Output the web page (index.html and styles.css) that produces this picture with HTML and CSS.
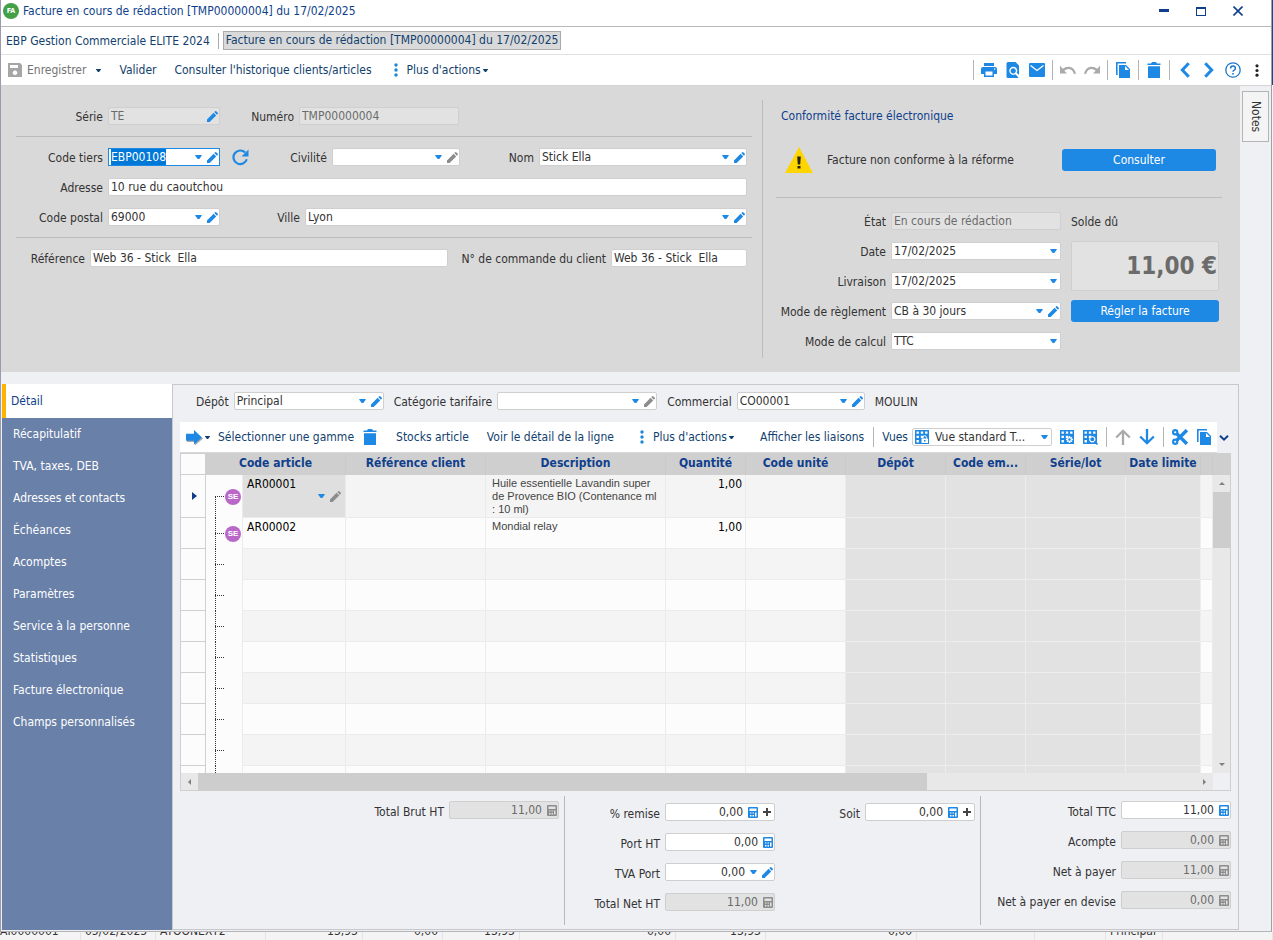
FILE: index.html
```
<!DOCTYPE html>
<html lang="fr">
<head>
    <meta charset="UTF-8">
    <meta name="viewport" content="width=device-width, initial-scale=1.0">
    <title>Facture en cours de rédaction [TMP00000004] du 17/02/2025</title>
    <link rel="stylesheet" href="styles.css">
</head>
<body>
    <!-- Icon set -->
    <svg class="sprite" aria-hidden="true">
        <symbol id="i-caret" viewBox="0 0 8 5"><path d="M0 0h8v1L5 5H3L0 1z"/></symbol>
        <symbol id="i-pencil" viewBox="0 0 11 11"><path d="M0 11V8.400L6.600 1.800 9.200 4.400 2.600 11zM7.300 1.100 8.200.200q.5-.4 1 0l1.600 1.600q.4.500 0 1l-.9.900z"/></symbol>
        <symbol id="i-save" viewBox="0 0 14 14"><path fill-rule="evenodd" d="M0 0h12l2 2v12H0zM2 2v3h8V2zM7 7.500a2.300 2.300 0 1 0 .01 0z"/></symbol>
        <symbol id="i-dots" viewBox="0 0 4 14"><circle cx="2" cy="2" r="1.700"/><circle cx="2" cy="7" r="1.700"/><circle cx="2" cy="12" r="1.700"/></symbol>
        <symbol id="i-print" viewBox="0 0 16 14"><path fill-rule="evenodd" d="M3 0h10v3H3zM2 4h12q2 0 2 2v5h-3v3H3v-3H0V6q0-2 2-2zm2.500 4.500v4h7v-4zM13 5.500v1.300h1.300V5.500z"/></symbol>
        <symbol id="i-preview" viewBox="0 0 13 16"><path fill-rule="evenodd" d="M1.500 0H9l3.500 3.500V13L10.200 10.800A4 4 0 1 0 8.800 12.200L12 15.500q-.4.500-1 .5H1.500Q0 16 0 14.500v-13Q0 0 1.500 0zM6.700 6.300a2.600 2.600 0 1 1-.01 0z"/></symbol>
        <symbol id="i-mail" viewBox="0 0 16 14"><rect width="16" height="14" rx="1"/><path d="M1.500 2.500 8 7.500l6.500-5" fill="none" stroke="#fff" stroke-width="1.300"/></symbol>
        <symbol id="i-undo" viewBox="0 0 16 9"><path d="M0 0v8h7L4.300 5.300Q6.500 3.400 9 3.600 12.500 4 14 8.800l2-.7Q14 1.300 9 1.200 5.500 1 2.700 3.200z"/></symbol>
        <symbol id="i-redo" viewBox="0 0 16 9"><path d="M16 0v8H9l2.700-2.700Q9.500 3.400 7 3.600 3.500 4 2 8.800L0 8.100Q2 1.300 7 1.200q3.500-.2 6.300 2z"/></symbol>
        <symbol id="i-copy" viewBox="0 0 14 16"><path d="M0 0h10v1.600H1.600V13H0z"/><path fill-rule="evenodd" d="M3 3h7l4 4v9H3zM9 4v4h4z"/></symbol>
        <symbol id="i-trash" viewBox="0 0 13 16"><path d="M0 1.500h3.500L4.500 0h4l1 1.500H13V3H0zM.5 4.300h12V16H.5z"/></symbol>
        <symbol id="i-prev" viewBox="0 0 10 15"><path d="M8.500 1.200 2.500 7.500l6 6.300" fill="none" stroke="currentColor" stroke-width="2.800"/></symbol>
        <symbol id="i-next" viewBox="0 0 10 15"><path d="M1.500 1.200l6 6.300-6 6.300" fill="none" stroke="currentColor" stroke-width="2.800"/></symbol>
        <symbol id="i-help" viewBox="0 0 16 16"><circle cx="8" cy="8" r="7.200" fill="none" stroke="currentColor" stroke-width="1.300"/><path d="M5.600 6.400q0-2.400 2.400-2.400t2.400 2.200q0 1.200-1.200 1.900T8 9.800" fill="none" stroke="currentColor" stroke-width="1.500"/><rect x="7.200" y="11" width="1.600" height="1.600"/></symbol>
        <symbol id="i-refresh" viewBox="0 0 17 17"><path d="M14.800 10.300A6.800 6.800 0 1 1 13.200 3.600" fill="none" stroke="currentColor" stroke-width="2.200"/><path d="M16.500.5v7h-7z"/></symbol>
        <symbol id="i-warning" viewBox="0 0 28 26"><path d="M14 0l14 26H0z" fill="#ffd500"/><path d="M12.200 9.500h3.600l-.6 8h-2.400zM12.500 19h3v2.500h-3z" fill="#222"/></symbol>
        <symbol id="i-arrow" viewBox="0 0 17 16"><path d="M1 5.500h8V2l8 7-8 7v-3.500H1z" fill="#a9a9a9"/><path d="M0 4.200h8V.5L15.800 8 8 15v-3.800H0z"/></symbol>
        <symbol id="i-grid" viewBox="0 0 15 15"><path fill-rule="evenodd" d="M0 0h14v14H0zM1.500 1.500v2.300h2.400V1.500zm4.300 0v2.300h2.400V1.500zm4.300 0v2.300h2.400V1.500zM1.500 5.800v2.300h2.400V5.800zm4.300 0v2.300h2.400V5.800zM1.500 10.100v2.300h2.400v-2.300z"/></symbol>
        <symbol id="i-lock" viewBox="0 0 15 15"><use href="#i-grid"/><rect x="6.500" y="8.500" width="6.500" height="4.500" fill="#fff"/><path d="M8 8.500V7.300q0-1.600 1.700-1.600t1.700 1.600v1.200" fill="none" stroke="#fff"/><rect x="9" y="10" width="1.500" height="1.500"/></symbol>
        <symbol id="i-gridset" viewBox="0 0 15 15"><use href="#i-grid"/><path d="M9.500 6v7M6 9.500h7M7.200 7.200l4.600 4.600M11.800 7.200l-4.600 4.600" stroke="#fff" stroke-width="1.500"/><circle cx="9.500" cy="9.500" r="1.200"/></symbol>
        <symbol id="i-gridfind" viewBox="0 0 15 15"><use href="#i-grid"/><circle cx="9.300" cy="9.300" r="2.600" fill="none" stroke="#fff" stroke-width="1.100"/><path d="M11.500 11.500l3 3" stroke="currentColor" stroke-width="1.600"/></symbol>
        <symbol id="i-up" viewBox="0 0 16 16"><path d="M8 16V2M1.200 8.500 8 1.800l6.800 6.700" fill="none" stroke="currentColor" stroke-width="2.300"/></symbol>
        <symbol id="i-down" viewBox="0 0 16 16"><path d="M8 0v14M1.200 7.500 8 14.200l6.800-6.700" fill="none" stroke="currentColor" stroke-width="2.300"/></symbol>
        <symbol id="i-cut" viewBox="0 0 15 15"><path d="M4.500 4.500 14 14M4.500 10.500 14 1" stroke="currentColor" stroke-width="3.200"/><circle cx="3" cy="3" r="2" fill="none" stroke="currentColor" stroke-width="2"/><circle cx="3" cy="12" r="2" fill="none" stroke="currentColor" stroke-width="2"/></symbol>
        <symbol id="i-chevron" viewBox="0 0 10 7"><path d="M1 1.200l4 4 4-4" fill="none" stroke="currentColor" stroke-width="2"/></symbol>
        <symbol id="i-calc" viewBox="0 0 10 11"><path fill-rule="evenodd" d="M1 0h8q1 0 1 1v9q0 1-1 1H1q-1 0-1-1V1q0-1 1-1zM1.500 1.500V4h7V1.500zM2 5.500v1h1.500v-1zm2.500 0v1H6v-1zM2 8v1.500h1.500V8zm2.500 0v1.500H6V8zM7 5.500v4h1.500v-4z"/></symbol>
        <symbol id="i-plus" viewBox="0 0 8 8"><path d="M3 0h2v3h3v2H5v3H3V5H0V3h3z"/></symbol>
        <symbol id="i-min" viewBox="0 0 10 10"><path d="M0 3h10v3H0z"/></symbol>
        <symbol id="i-max" viewBox="0 0 10 10"><path fill-rule="evenodd" d="M0 1h10v9H0zM1 3v6h8V3z"/></symbol>
        <symbol id="i-close" viewBox="0 0 10 10"><path d="M.5.500l9 9M9.500.500l-9 9" stroke="currentColor" stroke-width="1.600"/></symbol>
    </svg>

    <div class="window">
        <header class="titlebar">
            <span class="app-badge">FA</span>
            <h1>Facture en cours de rédaction [TMP00000004] du 17/02/2025</h1>
            <div class="window-buttons">
                <button aria-label="Réduire"><svg class="ico-10"><use href="#i-min"/></svg></button>
                <button aria-label="Agrandir"><svg class="ico-10"><use href="#i-max"/></svg></button>
                <button aria-label="Fermer"><svg class="ico-10"><use href="#i-close"/></svg></button>
            </div>
        </header>

        <nav class="tabs">
            <a href="#">EBP Gestion Commerciale ELITE 2024</a>
            <span class="tab-sep"></span>
            <a href="#" class="active">Facture en cours de rédaction [TMP00000004] du 17/02/2025</a>
        </nav>

        <div class="toolbar">
            <button class="save" disabled><svg class="ico-14"><use href="#i-save"/></svg>Enregistrer</button>
            <button class="drop" aria-label="Options d'enregistrement"><svg class="caret-sm"><use href="#i-caret"/></svg></button>
            <button>Valider</button>
            <button>Consulter l'historique clients/articles</button>
            <button class="more"><svg class="ico-dots"><use href="#i-dots"/></svg>Plus d'actions<svg class="caret-sm"><use href="#i-caret"/></svg></button>
            <div class="toolbar-icons">
                <span class="sep"></span>
                <button aria-label="Imprimer"><svg class="ico-16"><use href="#i-print"/></svg></button>
                <button aria-label="Aperçu"><svg class="ico-16"><use href="#i-preview"/></svg></button>
                <button aria-label="Envoyer"><svg class="ico-16"><use href="#i-mail"/></svg></button>
                <span class="sep"></span>
                <button aria-label="Annuler" disabled><svg class="ico-16"><use href="#i-undo"/></svg></button>
                <button aria-label="Rétablir" disabled><svg class="ico-16"><use href="#i-redo"/></svg></button>
                <span class="sep"></span>
                <button aria-label="Dupliquer"><svg class="ico-16"><use href="#i-copy"/></svg></button>
                <span class="sep"></span>
                <button aria-label="Supprimer"><svg class="ico-16"><use href="#i-trash"/></svg></button>
                <span class="sep"></span>
                <button aria-label="Précédent"><svg class="ico-16"><use href="#i-prev"/></svg></button>
                <button aria-label="Suivant"><svg class="ico-16"><use href="#i-next"/></svg></button>
                <button aria-label="Aide" class="help"><svg class="ico-16"><use href="#i-help"/></svg></button>
                <button aria-label="Plus" class="kebab"><svg class="ico-dots"><use href="#i-dots"/></svg></button>
            </div>
        </div>

        <div class="workspace">
            <main class="document">
                <!-- Invoice header -->
                <section class="invoice-header">
                    <div class="customer">
                        <div class="row">
                            <label class="l-first" for="serie">Série</label>
                            <div class="field w-112 disabled"><input id="serie" value="TE" disabled><button aria-label="Modifier"><svg class="pencil"><use href="#i-pencil"/></svg></button></div>
                            <label class="l-number" for="numero">Numéro</label>
                            <div class="field w-160 disabled"><input id="numero" value="TMP00000004" disabled></div>
                        </div>
                        <hr>
                        <div class="row">
                            <label class="l-first" for="codeTiers">Code tiers</label>
                            <div class="field w-112 focused"><input id="codeTiers" class="selected" value="EBP00108"><button aria-label="Choisir"><svg class="caret"><use href="#i-caret"/></svg></button><button aria-label="Modifier"><svg class="pencil"><use href="#i-pencil"/></svg></button></div>
                            <button class="refresh" aria-label="Actualiser"><svg class="ico-17"><use href="#i-refresh"/></svg></button>
                            <label class="l-title" for="civilite">Civilité</label>
                            <div class="field w-128"><select id="civilite"><option></option></select><svg class="caret"><use href="#i-caret"/></svg><button aria-label="Modifier" disabled><svg class="pencil"><use href="#i-pencil"/></svg></button></div>
                            <label class="l-name" for="nom">Nom</label>
                            <div class="field grow"><select id="nom"><option>Stick Ella</option></select><svg class="caret"><use href="#i-caret"/></svg><button aria-label="Modifier"><svg class="pencil"><use href="#i-pencil"/></svg></button></div>
                        </div>
                        <div class="row">
                            <label class="l-first" for="adresse">Adresse</label>
                            <div class="field grow"><input id="adresse" value="10 rue du caoutchou"></div>
                        </div>
                        <div class="row">
                            <label class="l-first" for="cp">Code postal</label>
                            <div class="field w-112"><select id="cp"><option>69000</option></select><svg class="caret"><use href="#i-caret"/></svg><button aria-label="Modifier"><svg class="pencil"><use href="#i-pencil"/></svg></button></div>
                            <label class="l-city" for="ville">Ville</label>
                            <div class="field grow"><select id="ville"><option>Lyon</option></select><svg class="caret"><use href="#i-caret"/></svg><button aria-label="Modifier"><svg class="pencil"><use href="#i-pencil"/></svg></button></div>
                        </div>
                        <hr>
                        <div class="row">
                            <label class="l-ref" for="reference">Référence</label>
                            <div class="field grow"><input id="reference" value="Web 36 - Stick  Ella"></div>
                            <label class="l-order" for="commande">N° de commande du client</label>
                            <div class="field w-136"><input id="commande" value="Web 36 - Stick  Ella"></div>
                        </div>
                    </div>

                    <div class="status">
                        <h2>Conformité facture électronique</h2>
                        <div class="compliance">
                            <svg class="ico-warning"><use href="#i-warning"/></svg>
                            <p>Facture non conforme à la réforme</p>
                            <button class="btn">Consulter</button>
                        </div>
                        <hr>
                        <div class="status-grid">
                            <label for="etat">État</label>
                            <div class="field disabled"><select id="etat" disabled><option>En cours de rédaction</option></select></div>
                            <label class="balance-label" for="solde">Solde dû</label>
                            <label for="date">Date</label>
                            <div class="field"><select id="date"><option>17/02/2025</option></select><svg class="caret"><use href="#i-caret"/></svg></div>
                            <input id="solde" class="balance" value="11,00 €" disabled>
                            <label for="livraison">Livraison</label>
                            <div class="field"><select id="livraison"><option>17/02/2025</option></select><svg class="caret"><use href="#i-caret"/></svg></div>
                            <label for="reglement">Mode de règlement</label>
                            <div class="field"><select id="reglement"><option>CB à 30 jours</option></select><svg class="caret"><use href="#i-caret"/></svg><button aria-label="Modifier"><svg class="pencil"><use href="#i-pencil"/></svg></button></div>
                            <button class="btn">Régler la facture</button>
                            <label for="calcul">Mode de calcul</label>
                            <div class="field"><select id="calcul"><option>TTC</option></select><svg class="caret"><use href="#i-caret"/></svg></div>
                        </div>
                    </div>
                </section>

                <div class="detail">
                    <nav class="sidebar">
                        <a href="#" class="active">Détail</a>
                        <a href="#">Récapitulatif</a>
                        <a href="#">TVA, taxes, DEB</a>
                        <a href="#">Adresses et contacts</a>
                        <a href="#">Échéances</a>
                        <a href="#">Acomptes</a>
                        <a href="#">Paramètres</a>
                        <a href="#">Service à la personne</a>
                        <a href="#">Statistiques</a>
                        <a href="#">Facture électronique</a>
                        <a href="#">Champs personnalisés</a>
                    </nav>

                    <section class="panel">
                        <div class="filters">
                            <label for="depot">Dépôt</label>
                            <div class="field w-150"><select id="depot"><option>Principal</option></select><svg class="caret"><use href="#i-caret"/></svg><button aria-label="Modifier"><svg class="pencil"><use href="#i-pencil"/></svg></button></div>
                            <label class="next" for="categorie">Catégorie tarifaire</label>
                            <div class="field w-160"><select id="categorie"><option></option></select><svg class="caret"><use href="#i-caret"/></svg><button aria-label="Modifier" disabled><svg class="pencil"><use href="#i-pencil"/></svg></button></div>
                            <label class="next" for="commercial">Commercial</label>
                            <div class="field w-128"><select id="commercial"><option>CO00001</option></select><svg class="caret"><use href="#i-caret"/></svg><button aria-label="Modifier"><svg class="pencil"><use href="#i-pencil"/></svg></button></div>
                            <span class="next">MOULIN</span>
                        </div>

                        <div class="grid-bar">
                            <div class="grid-tools">
                                <button aria-label="Insérer" class="insert"><svg class="ico-17"><use href="#i-arrow"/></svg><svg class="caret-sm"><use href="#i-caret"/></svg></button>
                                <button>Sélectionner une gamme</button>
                                <button aria-label="Supprimer la ligne" class="blue"><svg class="ico-16"><use href="#i-trash"/></svg></button>
                                <button class="wide">Stocks article</button>
                                <button class="wide">Voir le détail de la ligne</button>
                                <button class="more"><svg class="ico-dots"><use href="#i-dots"/></svg>Plus d'actions<svg class="caret-sm"><use href="#i-caret"/></svg></button>
                                <button class="links">Afficher les liaisons</button>
                                <div class="views">
                                    <span class="sep"></span>
                                    <label for="vues">Vues</label>
                                    <div class="field w-140"><svg class="ico-15"><use href="#i-lock"/></svg><select id="vues"><option>Vue standard T...</option></select><svg class="caret"><use href="#i-caret"/></svg></div>
                                    <button aria-label="Paramétrer la vue"><svg class="ico-15"><use href="#i-gridset"/></svg></button>
                                    <button aria-label="Rechercher"><svg class="ico-15"><use href="#i-gridfind"/></svg></button>
                                    <span class="sep"></span>
                                    <button aria-label="Monter" disabled><svg class="ico-16"><use href="#i-up"/></svg></button>
                                    <button aria-label="Descendre"><svg class="ico-16"><use href="#i-down"/></svg></button>
                                    <span class="sep"></span>
                                    <button aria-label="Couper"><svg class="ico-16"><use href="#i-cut"/></svg></button>
                                    <button aria-label="Copier"><svg class="ico-16"><use href="#i-copy"/></svg></button>
                                </div>
                            </div>
                            <button class="overflow" aria-label="Autres commandes"><svg class="ico-10"><use href="#i-chevron"/></svg></button>
                        </div>

                        <div class="grid">
                            <div class="grid-body">
                                <table>
                                    <colgroup>
                                        <col class="c-ind"><col class="c-tree"><col class="c-code"><col class="c-ref"><col class="c-desc"><col class="c-qty"><col class="c-unit"><col class="c-depot"><col class="c-emp"><col class="c-lot"><col class="c-date"><col>
                                    </colgroup>
                                    <thead>
                                        <tr>
                                            <th class="ind"></th>
                                            <th colspan="2">Code article</th>
                                            <th>Référence client</th>
                                            <th>Description</th>
                                            <th>Quantité</th>
                                            <th>Code unité</th>
                                            <th>Dépôt</th>
                                            <th>Code em...</th>
                                            <th>Série/lot</th>
                                            <th>Date limite</th>
                                            <th></th>
                                        </tr>
                                    </thead>
                                    <tbody>
                                        <tr class="current">
                                            <td class="ind"><span class="marker"></span></td>
                                            <td class="tree"><span class="se">SE</span></td>
                                            <td class="code">AR00001
                                                <div class="cell-tools"><svg class="caret"><use href="#i-caret"/></svg><svg class="pencil off"><use href="#i-pencil"/></svg></div>
                                            </td>
                                            <td></td>
                                            <td class="desc">Huile essentielle Lavandin super de Provence BIO (Contenance ml : 10 ml)</td>
                                            <td class="qty">1,00</td>
                                            <td></td>
                                            <td class="na"></td><td class="na"></td><td class="na"></td><td class="na"></td><td></td>
                                        </tr>
                                        <tr>
                                            <td class="ind"></td>
                                            <td class="tree"><span class="se">SE</span></td>
                                            <td class="code">AR00002</td>
                                            <td></td>
                                            <td class="desc">Mondial relay</td>
                                            <td class="qty">1,00</td>
                                            <td></td>
                                            <td class="na"></td><td class="na"></td><td class="na"></td><td class="na"></td><td></td>
                                        </tr>
                                        <tr><td class="ind"></td><td class="tree"></td><td></td><td></td><td></td><td></td><td></td><td class="na"></td><td class="na"></td><td class="na"></td><td class="na"></td><td></td></tr>
                                        <tr><td class="ind"></td><td class="tree"></td><td></td><td></td><td></td><td></td><td></td><td class="na"></td><td class="na"></td><td class="na"></td><td class="na"></td><td></td></tr>
                                        <tr><td class="ind"></td><td class="tree"></td><td></td><td></td><td></td><td></td><td></td><td class="na"></td><td class="na"></td><td class="na"></td><td class="na"></td><td></td></tr>
                                        <tr><td class="ind"></td><td class="tree"></td><td></td><td></td><td></td><td></td><td></td><td class="na"></td><td class="na"></td><td class="na"></td><td class="na"></td><td></td></tr>
                                        <tr><td class="ind"></td><td class="tree"></td><td></td><td></td><td></td><td></td><td></td><td class="na"></td><td class="na"></td><td class="na"></td><td class="na"></td><td></td></tr>
                                        <tr><td class="ind"></td><td class="tree"></td><td></td><td></td><td></td><td></td><td></td><td class="na"></td><td class="na"></td><td class="na"></td><td class="na"></td><td></td></tr>
                                        <tr><td class="ind"></td><td class="tree"></td><td></td><td></td><td></td><td></td><td></td><td class="na"></td><td class="na"></td><td class="na"></td><td class="na"></td><td></td></tr>
                                        <tr><td class="ind"></td><td class="tree"></td><td></td><td></td><td></td><td></td><td></td><td class="na"></td><td class="na"></td><td class="na"></td><td class="na"></td><td></td></tr>
                                    </tbody>
                                </table>
                            </div>
                            <div class="vscroll">
                                <div class="vscroll-head"></div>
                                <span class="tri up"></span>
                                <div class="vthumb"></div>
                                <span class="tri down"></span>
                            </div>
                            <div class="hscroll">
                                <span class="tri left"></span>
                                <div class="htrack"><div class="hthumb"></div></div>
                                <span class="tri right"></span>
                            </div>
                        </div>

                        <!-- Totals -->
                        <div class="totals">
                            <div class="totals-gross">
                                <label for="brut">Total Brut HT</label>
                                <div class="field w-110 disabled"><input id="brut" value="11,00" disabled><svg class="calc"><use href="#i-calc"/></svg></div>
                            </div>
                            <div class="totals-net">
                                <label for="remise">% remise</label>
                                <div class="field w-110"><input id="remise" value="0,00"><button aria-label="Calculatrice"><svg class="calc"><use href="#i-calc"/></svg></button><button aria-label="Ajouter" class="add"><svg class="plus"><use href="#i-plus"/></svg></button></div>
                                <label for="soit">Soit</label>
                                <div class="field w-110"><input id="soit" value="0,00"><button aria-label="Calculatrice"><svg class="calc"><use href="#i-calc"/></svg></button><button aria-label="Ajouter" class="add"><svg class="plus"><use href="#i-plus"/></svg></button></div>
                                <label class="first-col" for="port">Port HT</label>
                                <div class="field w-110"><input id="port" value="0,00"><button aria-label="Calculatrice"><svg class="calc"><use href="#i-calc"/></svg></button></div>
                                <label class="first-col" for="tva">TVA Port</label>
                                <div class="field w-110"><input id="tva" value="0,00"><button aria-label="Choisir"><svg class="caret"><use href="#i-caret"/></svg></button><button aria-label="Modifier"><svg class="pencil"><use href="#i-pencil"/></svg></button></div>
                                <label class="first-col" for="net">Total Net HT</label>
                                <div class="field w-110 disabled"><input id="net" value="11,00" disabled><svg class="calc"><use href="#i-calc"/></svg></div>
                            </div>
                            <div class="totals-due">
                                <label for="ttc">Total TTC</label>
                                <div class="field w-110"><input id="ttc" value="11,00"><button aria-label="Calculatrice"><svg class="calc"><use href="#i-calc"/></svg></button></div>
                                <label for="acompte">Acompte</label>
                                <div class="field w-110 disabled"><input id="acompte" value="0,00" disabled><svg class="calc"><use href="#i-calc"/></svg></div>
                                <label for="payer">Net à payer</label>
                                <div class="field w-110 disabled"><input id="payer" value="11,00" disabled><svg class="calc"><use href="#i-calc"/></svg></div>
                                <label for="devise">Net à payer en devise</label>
                                <div class="field w-110 disabled"><input id="devise" value="0,00" disabled><svg class="calc"><use href="#i-calc"/></svg></div>
                            </div>
                        </div>
                    </section>
                </div>
            </main>

            <aside class="dock">
                <button class="notes">Notes</button>
            </aside>
        </div>
    </div>

    <div class="edge"></div>

    <!-- List window behind -->
    <div class="backdrop">
        <span class="start">AI0000001</span>
        <span>05/02/2025</span>
        <span>ATOONEXT2</span>
        <span class="num">13,93</span>
        <span class="num">0,00</span>
        <span class="num">13,93</span>
        <span class="num">0,00</span>
        <span class="num">13,93</span>
        <span class="num">0,00</span>
        <span></span>
        <span></span>
        <span>Principal</span>
        <span></span>
    </div>

    <script src="script.js"></script>
</body>
</html>
```

FILE: styles.css
```
* {
    margin: 0;
    padding: 0;
    box-sizing: border-box;
}

body {
    height: 100vh;
    display: grid;
    grid-template-columns: minmax(0, 1fr) 1px;
    grid-template-rows: minmax(0, 1fr) 8px;
    overflow: hidden;
    background: #fff;
    color: #333;
    font-family: "DejaVu Sans Condensed", "Noto Sans", sans-serif;
    font-size: 12px;
    line-height: 18px;
}

button, input, select {
    font: inherit;
    color: inherit;
    border: none;
    background: none;
    outline: none;
}

button {
    display: flex;
    align-items: center;
    white-space: nowrap;
}

a {
    color: inherit;
    text-decoration: none;
}

label {
    white-space: nowrap;
    text-align: right;
    padding-top: 2px;
}

svg {
    display: block;
    flex: none;
    fill: currentColor;
}

.sprite {
    position: absolute;
    width: 0;
    height: 0;
}

/* Icon sizes */
.ico-10 { width: 10px; height: 10px; }
.ico-14 { width: 14px; height: 14px; }
.ico-15 { width: 15px; height: 15px; }
.ico-16 { width: 16px; height: 16px; }
.ico-17 { width: 17px; height: 17px; }
.ico-dots { width: 4px; height: 14px; color: #1e88d8; }
.ico-warning { width: 28px; height: 26px; }
.caret { width: 7px; height: 4px; color: #1e88e5; }
.caret-sm { width: 5px; height: 3px; }
.pencil { width: 11px; height: 11px; color: #1e88e5; }
.calc { width: 10px; height: 11px; color: #1e88e5; }
.plus { width: 8px; height: 8px; color: #444; }

/* Window frame */
.window {
    display: flex;
    flex-direction: column;
    border-left: 1px solid #9a9ab0;
    border-right: 1px solid #a0a0a8;
    border-bottom: 1px solid #b4b4b8;
    background: #eff0f4;
}

.edge {
    background: linear-gradient(#0f4a92 85px, #f4f4f4 85px);
}

.titlebar {
    display: flex;
    align-items: center;
    gap: 4px;
    height: 27px;
    padding: 0 28px 4px 2px;
    background: #fff;
    border-bottom: 1px solid #b8b8b8;
    color: #0f3f8c;
}

.titlebar h1 {
    font-size: 12px;
    font-weight: normal;
}

.app-badge {
    width: 16px;
    height: 16px;
    border-radius: 50%;
    background: #43a047;
    color: #fff;
    font-size: 7px;
    font-weight: bold;
    line-height: 16px;
    text-align: center;
}

.window-buttons {
    display: flex;
    gap: 27px;
    margin-left: auto;
}

.tabs {
    display: flex;
    align-items: center;
    gap: 4px;
    height: 28px;
    padding-left: 5px;
    background: #fff;
    border-bottom: 1px solid #e0e0e0;
    color: #123f6e;
}

.tabs .tab-sep {
    width: 1px;
    height: 16px;
    margin-left: 4px;
    background: #aaa;
}

.tabs .active {
    padding: 0 2px;
    background: #d9d9d9;
    border: 1px solid #aaa;
    line-height: 17px;
}

.sep {
    width: 1px;
    height: 20px;
    background: #b4b4b4;
}

.toolbar {
    display: flex;
    align-items: center;
    gap: 18px;
    height: 31px;
    padding: 0 12px 0 7px;
    background: #fff;
    border-bottom: 1px solid #d4d4d4;
    color: #123f6e;
}

.toolbar .save {
    gap: 5px;
    color: #737373;
}

.toolbar .save svg {
    color: #a6a6a6;
}

.toolbar .drop {
    margin-left: -8px;
}

.more {
    gap: 2px;
    margin-left: 4px;
}

.more .ico-dots {
    margin-right: 7px;
}

.toolbar-icons {
    display: flex;
    align-items: center;
    gap: 8px;
    margin-left: auto;
    color: #1e88e5;
}

.toolbar-icons .sep {
    margin: 0 -1px;
}

.toolbar-icons button:disabled,
.views button:disabled {
    color: #aaa;
}

.toolbar-icons .kebab {
    margin-left: 6px;
}

.toolbar-icons .kebab .ico-dots {
    height: 13px;
    color: #222;
}

.toolbar-icons .help {
    color: #1e78c8;
}

.workspace {
    flex: 1;
    display: flex;
    min-height: 0;
}

.document {
    flex: 1;
    display: flex;
    flex-direction: column;
    min-width: 0;
    padding-bottom: 1px;
}

.dock {
    width: 31px;
    padding: 5px 1px 0 2px;
}

.notes {
    width: 27px;
    height: 51px;
    justify-content: center;
    background: #f4f4f4;
    border: 1px solid #b4b4b4;
    writing-mode: vertical-rl;
}

/* Fields */
.field {
    display: flex;
    align-items: center;
    gap: 5px;
    height: 18px;
    padding: 0 1px 0 2px;
    background: #fff;
    border: 1px solid #cfcfcf;
    border-radius: 2px;
}

.field input,
.field select {
    flex: 1;
    width: 0;
    min-width: 0;
    height: 16px;
    line-height: 16px;
    appearance: none;
    white-space: pre;
}

.field > .caret:last-child {
    margin-right: 2px;
}

.field button:disabled .pencil,
.pencil.off {
    color: #8c8c8c;
}

.field.disabled {
    background: #e2e2e2;
}

.field.disabled input,
.field.disabled select {
    color: #6b6b6b;
    opacity: 1;
}

.field.disabled .calc {
    color: #8c8c8c;
}

.field.focused {
    border-color: #1e88e5;
    border-radius: 0;
}

.selected::selection {
    background: #0078d7;
    color: #fff;
}

.grow { flex: 1; }
.w-110 { width: 110px; }
.w-112 { width: 112px; }
.w-128 { width: 128px; }
.w-136 { width: 136px; }
.w-140 { width: 140px; }
.w-150 { width: 150px; }
.w-160 { width: 160px; }

.btn {
    height: 22px;
    justify-content: center;
    border-radius: 3px;
    background: #1e88e5;
    color: #fff;
}

hr {
    border: none;
    border-top: 1px solid #bcbcbc;
}

/* Invoice header */
.invoice-header {
    display: flex;
    min-height: 286px;
    padding: 14px 18px 14px 15px;
    background: #d9d9d9;
}

.customer {
    flex: 1;
    display: flex;
    flex-direction: column;
    gap: 12px;
    padding: 7px 10px 0 0;
    border-right: 1px solid #bcbcbc;
}

.customer hr {
    margin: -1px 0;
}

.row {
    display: flex;
    align-items: center;
    gap: 5px;
    height: 18px;
    padding-right: 5px;
}

.l-first { width: 87px; }
.l-number { width: 69px; }
.l-title { width: 73px; }
.l-name { width: 69px; }
.l-city { width: 75px; }
.l-ref { width: 69px; }
.l-order { width: 153px; }

.refresh {
    margin-left: 7px;
    color: #1e88e5;
}

.status {
    width: 459px;
    padding: 7px 0 0 13px;
}

.status h2 {
    padding-left: 5px;
    color: #0f3f8c;
    font-size: 12px;
    font-weight: normal;
}

.compliance {
    display: flex;
    align-items: center;
    gap: 14px;
    height: 26px;
    margin: 22px 0 24px;
    padding: 0 6px 0 9px;
}

.compliance .btn {
    width: 154px;
    margin-left: auto;
}

.status-grid {
    display: grid;
    grid-template-columns: 110px 170px 148px;
    grid-template-rows: repeat(5, 18px);
    gap: 12px 5px;
    align-items: center;
    padding-top: 14px;
}

.status-grid .balance-label,
.status-grid .balance,
.status-grid .btn {
    grid-column: 3;
    margin-left: 5px;
    width: 148px;
}

.status-grid .balance-label {
    text-align: left;
}

.balance {
    grid-row: 2 / span 2;
    height: 50px;
    padding-right: 1px;
    border: 1px solid #cfcfcf;
    border-radius: 2px;
    background: #e2e2e2;
    color: #6b6b6b;
    font-size: 24px;
    font-weight: bold;
    text-align: right;
}

/* Detail area */
.detail {
    flex: 1;
    display: flex;
    min-height: 0;
    padding: 12px 1px 0;
}

.sidebar {
    width: 171px;
    background: #6980a9;
    border-right: 1px solid #c8c8cc;
    color: #fff;
}

.sidebar a {
    display: block;
    padding-left: 11px;
    line-height: 32px;
}

.sidebar .active {
    padding-left: 5px;
    border-left: 4px solid #ffb300;
    background: #fff;
    color: #0f3f8c;
    line-height: 34px;
}

.panel {
    flex: 1;
    display: flex;
    flex-direction: column;
    min-width: 0;
    padding: 7px 7px 4px;
    border: 1px solid #c8c8cc;
    border-left: none;
}

.filters {
    display: flex;
    align-items: center;
    gap: 5px;
    height: 18px;
    padding-left: 16px;
}

.filters .next {
    margin-left: 5px;
}

.filters span {
    padding-top: 2px;
}

.grid-bar {
    display: flex;
    margin-top: 12px;
    color: #123f6e;
}

.grid-tools {
    flex: 1;
    display: flex;
    align-items: center;
    gap: 8px;
    height: 31px;
    padding: 0 5px 0 6px;
    background: #fff;
    border-bottom: 1px solid #d9d9d9;
}

.insert {
    gap: 2px;
}

.insert .ico-17,
.blue {
    color: #1e88e5;
}

.grid-tools .wide {
    margin-left: 10px;
}

.grid-tools .more {
    margin-left: 18px;
}

.grid-tools .links {
    margin-left: 18px;
}

.views {
    display: flex;
    align-items: center;
    gap: 8px;
    margin-left: auto;
    color: #1e88e5;
}

.views label {
    margin-right: -4px;
    padding: 0;
    color: #123f6e;
}

.views select {
    color: #333;
}

.overflow {
    width: 14px;
    justify-content: center;
    color: #0f3f8c;
}

/* Article grid */
.grid {
    flex: 1;
    display: grid;
    grid-template-columns: minmax(0, 1fr) 17px;
    grid-template-rows: minmax(0, 1fr) 17px;
    min-height: 0;
    border: 1px solid #cfcfcf;
}

.grid-body {
    overflow: hidden;
    background: #fcfcfc;
}

table {
    width: 100%;
    table-layout: fixed;
    border-collapse: separate;
    border-spacing: 0;
}

.c-ind { width: 25px; }
.c-tree { width: 37px; }
.c-code { width: 103px; }
.c-ref { width: 140px; }
.c-desc { width: 180px; }
.c-qty { width: 80px; }
.c-unit { width: 100px; }
.c-depot { width: 100px; }
.c-emp { width: 80px; }
.c-lot { width: 100px; }
.c-date { width: 75px; }

th {
    height: 21px;
    background: #cfcfcf;
    border-right: 1px solid #cacaca;
    color: #0f3f8c;
    line-height: 18px;
    vertical-align: top;
    white-space: nowrap;
}

td {
    height: 31px;
    padding: 0 4px;
    border-right: 1px solid #ebebeb;
    border-bottom: 1px solid #ebebeb;
    color: #000;
    vertical-align: top;
}

tbody tr:nth-child(odd) td {
    background-color: #f4f4f4;
}

tbody tr .na.na {
    background-color: #e2e2e2;
    border-color: #ededed;
}

.ind.ind.ind {
    padding: 0;
    background: #fcfcfc;
    border-right: 1px solid #cfcfcf;
    border-bottom: 1px solid #cfcfcf;
    vertical-align: middle;
}

.marker {
    display: block;
    width: 0;
    margin-left: 11px;
    border: 4px solid transparent;
    border-left: 5px solid #0f3f8c;
    border-right: none;
}

/* dotted branch lines */
tbody tr td.tree {
    padding: 0 0 0 19px;
    border-bottom: none;
    background-color: #fcfcfc;
    background-image:
        repeating-linear-gradient(to bottom, #333 0 1px, transparent 1px 2px),
        repeating-linear-gradient(to right, #333 0 1px, transparent 1px 2px);
    background-repeat: no-repeat;
    background-size: 1px 100%, 9px 1px;
    background-position: 9px 0, 9px 50%;
    vertical-align: middle;
}

.current td {
    height: 43px;
}

tbody .current td.tree {
    background-size: 1px 50%, 9px 1px;
    background-position: 9px 100%, 9px 50%;
}

.se {
    display: block;
    width: 16px;
    height: 16px;
    border-radius: 50%;
    background: #ba68c8;
    color: #fff;
    font-family: "Liberation Sans", sans-serif;
    font-size: 8px;
    font-weight: bold;
    line-height: 16px;
    text-align: center;
}

tbody .current td.code {
    background: #dfdfdf;
}

.cell-tools {
    display: flex;
    align-items: center;
    justify-content: flex-end;
    gap: 5px;
    height: 6px;
}

.desc {
    padding: 2px 6px 0;
    color: #444;
    font-family: "Liberation Sans", sans-serif;
    font-size: 11px;
    line-height: 13px;
}

.qty {
    padding-right: 3px;
    text-align: right;
}

.vscroll {
    display: flex;
    flex-direction: column;
    background: #e8e8e8;
}

.vscroll-head {
    height: 21px;
    background: #cfcfcf;
}

.vthumb {
    height: 56px;
    background: #cdcdcd;
}

.tri {
    display: flex;
    flex: none;
    align-items: center;
    justify-content: center;
    width: 17px;
    height: 17px;
}

.tri::before {
    content: "";
    border: 3px solid transparent;
}

.tri.up::before { border-top: none; border-bottom-color: #808080; }
.tri.down::before { border-bottom: none; border-top-color: #808080; }
.tri.left::before { border-left: none; border-right-color: #808080; }
.tri.right::before { border-right: none; border-left-color: #808080; }

.tri.down {
    margin-top: auto;
}

.hscroll {
    display: flex;
    background: #e8e8e8;
}

.htrack {
    flex: 1;
}

.hthumb {
    width: 73%;
    height: 17px;
    background: #cdcdcd;
}

/* Totals */
.totals {
    display: flex;
    height: 129px;
    margin-top: 5px;
}

.totals .field input {
    text-align: right;
}

.totals .add {
    margin-right: 2px;
}

.totals-gross {
    flex: 1;
    display: flex;
    justify-content: flex-end;
    gap: 5px;
    padding: 5px 5px 0 0;
}

.totals-net {
    display: grid;
    grid-template-columns: 95px 110px 80px 110px;
    grid-auto-rows: 18px;
    gap: 12px 5px;
    padding: 7px 5px 0 0;
    border-left: 1px solid #b8b8bc;
}

.totals-net .first-col {
    grid-column: 1;
}

.totals-due {
    display: grid;
    grid-template-columns: 135px 110px;
    grid-auto-rows: 18px;
    gap: 12px 5px;
    padding-top: 5px;
    border-left: 1px solid #b8b8bc;
}

/* List window behind */
.backdrop {
    grid-column: 1 / -1;
    display: grid;
    grid-template-columns: 81px 75px 110px 97px 80px 77px 156px 90px 151px 118px 71px 57px 1fr;
    overflow: hidden;
    background: #f4f4f4;
}

.backdrop span {
    height: 18px;
    margin-top: -10px;
    padding: 0 4px;
    border-right: 1px solid #e4e4e4;
    white-space: nowrap;
}

.backdrop .start {
    padding-left: 0;
}

.backdrop .num {
    text-align: right;
}
```

FILE: script.js
```
// the customer code is ready to be typed over when the invoice opens
const codeTiers = document.getElementById('codeTiers');
codeTiers.focus();
codeTiers.select();
```
